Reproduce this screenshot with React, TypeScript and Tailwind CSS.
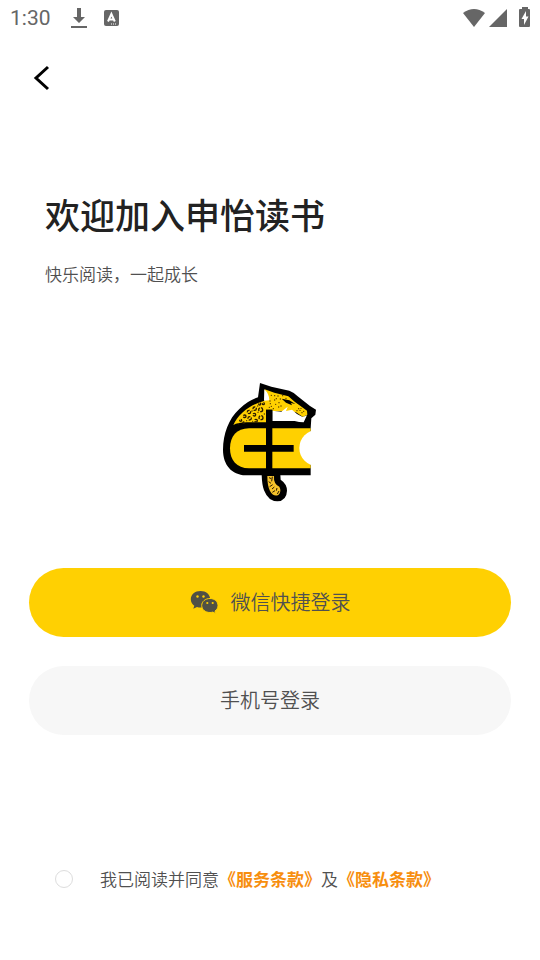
import type { ReactNode } from 'react';

const spots = [
  [92, 136, 3], [104, 124, 4], [117, 111, 5], [101, 143, 2], [119, 130, 5], [133, 119, 4],
  [134, 101, 5], [152, 104, 6], [149, 87, 3], [153, 128, 6], [138, 137, 4], [160, 86, 3],
];

const dots = [
  [184, 61], [194, 62], [204, 63], [199, 71], [211, 72], [207, 83], [218, 62], [194, 75],
  [184, 94], [197, 88], [206, 96], [190, 101], [181, 86], [213, 93], [228, 70], [178, 97],
  [261, 107], [270, 106], [276, 113], [281, 109], [266, 101], [273, 100],
  [180, 78], [110, 137], [126, 108], [144, 112], [143, 93], [86, 146], [163, 117], [128, 139],
];

function BrandLogo() {
  return (
    <svg viewBox="30 15 300 375" className="h-[125px] w-[100px]" role="img" aria-label="申怡读书">
      <path
        d="M150 24 L184 35 L238 47 Q252 52 263 64 L300 93 L318 104 L316 119 L304 130 L302 160 L302 301 L107 301 C65 299 39 270 39 224 C40 177 55 132 88 102 Q114 76 144 67 Z"
        fill="#000"
      />
      <path
        d="M302 160 H117 C80 160 60 185 60 220 C60 256 80 280 117 280 H302 Z"
        fill="#ffd000"
      />
      <path
        d="M70 150 C85 115 122 88 164 77 L164 43 L193 53 L235 64 L254 80 L291 107 L292 119 L279 126 L258 112 L238 108 L187 109 L187 104 H168 V142 H111 Q84 142 70 150 Z"
        fill="#ffd000"
      />
      <path d="M163 43 Q178 57 178 76 L162 77 Z" fill="#fff" />
      <path
        d="M187 107 L214 110 L233 95 L228 108 L246 104 L261 117 L278 126 L291 121 L281 142 Q267 142 254 138 L187 138 Z"
        fill="#fff"
      />
      <path d="M215 71 L238 76 L256 87 L243 84 L246 91 L228 83 Z" fill="#000" />
      {spots.map(([x, y, r]) => (
        <circle
          key={`${x}-${y}`}
          cx={x}
          cy={y}
          r={r}
          fill="none"
          stroke="#2b1b00"
          strokeWidth="4"
          strokeDasharray="10 3"
        />
      ))}
      {dots.map(([x, y]) => (
        <circle key={`${x}-${y}`} cx={x} cy={y} r="2" fill="#4d3200" />
      ))}
      <circle cx="322" cy="219" r="54" fill="#fff" />
      <path d="M168 104 H187 V284 H168 Z M102 210 H251 V230 H102 Z" fill="#000" />
      <path
        d="M155 299 H211 L212 314 Q231 327 231 347 Q230 377 202 379 Q175 379 162 346 Q156 330 155 299 Z"
        fill="#000"
      />
      <path
        d="M172 303 H192 Q190 327 208 335 Q216 350 205 360 Q190 366 180 348 Q172 333 172 303 Z"
        fill="#f5c22b"
      />
      <path
        d="M177 308 L184 311 M187 305 L185 319 M176 320 L183 325 M179 335 L188 329 M186 342 L193 336 M187 352 L195 347 M201 339 L199 347 M207 348 L202 357"
        fill="none"
        stroke="#2b1b00"
        strokeWidth="3"
      />
    </svg>
  );
}

function WechatIcon() {
  return (
    <svg viewBox="0 0 28 24" className="h-6 w-7" aria-hidden="true">
      <path
        d="M10.500 1 C5 1 .8 4.500 .8 9.300 C.8 12 2.200 14.300 4.300 15.800 L3.300 18.700 L7 17 Q8.700 17.600 10.500 17.600 C16 17.600 20.200 14 20.200 9.300 C20.200 4.500 16 1 10.500 1 Z"
        fill="#505045"
      />
      <path
        d="M20 8.500 C15.300 8.500 11.700 11.500 11.700 15.500 C11.700 19.500 15.300 22.500 20 22.500 Q21.500 22.500 22.800 22.100 L25.700 23.500 L25 21 C27 19.700 28 17.800 28 15.500 C28 11.500 24.500 8.500 20 8.500 Z"
        fill="#505045"
        stroke="#ffd000"
        strokeWidth="1"
      />
      <g fill="#ffd000">
        <circle cx="7.500" cy="6.500" r="1.200" />
        <circle cx="13.500" cy="6.500" r="1.200" />
        <circle cx="17.300" cy="13" r="1.100" />
        <circle cx="22.700" cy="13" r="1.100" />
      </g>
    </svg>
  );
}

function StatusBar() {
  return (
    <div className="flex h-9 items-center justify-between pl-[10px] pr-2 text-[#666]">
      <div className="flex items-center">
        <span className="font-[Roboto,sans-serif] text-[21px] leading-7">1:30</span>
        <svg viewBox="0 0 16 22" className="ml-5 h-[22px] w-4" fill="currentColor" aria-hidden="true">
          <path d="M6 1 H10 V10 H14 L8 16 L2 10 H6 Z M0 19 H16 V21 H0 Z" />
        </svg>
        <svg viewBox="0 0 16 16" className="ml-[17px] size-4" aria-hidden="true">
          <rect width="15" height="16" rx="2" fill="currentColor" />
          <path d="M4 11.500 L7.400 4 L10.800 11.500 M5.200 9.500 H9.600" fill="none" stroke="#fff" strokeWidth="2" />
          <path d="M7 14 H13" stroke="#fff" strokeWidth="1" strokeDasharray="1 1" />
        </svg>
      </div>
      <svg viewBox="0 0 70 22" className="h-[22px] w-[70px]" fill="currentColor" aria-hidden="true">
        <path d="M1 6 Q12 -2 23 6 L12 20 Z" />
        <path d="M27 20 L45 2 V20 Z" />
        <path d="M60 0 H66 V2 H67 Q68 2 68 3 V19 Q68 20 67 20 H58 Q57 20 57 19 V3 Q57 2 58 2 H60 Z" />
        <path d="M64 4 L59.500 12 H62 V18 L66.500 9.500 H64 Z" fill="#fff" />
      </svg>
    </div>
  );
}

interface LoginButtonProps {
  className: string;
  children: ReactNode;
}

function LoginButton({ className, children }: LoginButtonProps) {
  return (
    <button
      type="button"
      className={`flex h-[69px] w-full items-center justify-center gap-[13px] rounded-full pb-[2px] text-xl font-[350] text-[#505050] ${className}`}
    >
      {children}
    </button>
  );
}

export default function App() {
  return (
    <div className="min-h-screen bg-white font-['Noto_Sans_CJK_SC',sans-serif] text-[#505050]">
      <StatusBar />

      <header className="px-8 pt-7">
        <button type="button" aria-label="返回" className="flex h-7 w-5 items-center text-black">
          <svg viewBox="0 0 20 28" className="h-7 w-5" fill="none" stroke="currentColor" strokeWidth="3">
            <path d="M16 3 L4 14 L16 25" />
          </svg>
        </button>
      </header>

      <main className="px-[29px]">
        <section className="px-4 pt-24">
          <h1 className="text-[35px] font-medium leading-[52px] text-[#222]">欢迎加入申怡读书</h1>
          <p className="mt-[22px] text-[17px] font-[350] leading-6">快乐阅读，一起成长</p>
        </section>

        <div className="mt-[94px] flex justify-center">
          <BrandLogo />
        </div>

        <div className="mt-[63px] flex flex-col gap-[29px]">
          <LoginButton className="bg-[#ffd002]">
            <WechatIcon />
            <span>微信快捷登录</span>
          </LoginButton>
          <LoginButton className="bg-[#f7f7f7]">手机号登录</LoginButton>
        </div>

        <div className="mt-[132px] flex items-center pl-[26px] text-[17px] font-[350] leading-6">
          <input
            id="agree"
            type="checkbox"
            className="size-[18px] shrink-0 appearance-none rounded-full border border-[#ddd] checked:bg-[#ffd002]"
          />
          <div className="ml-[27px]">
            <label htmlFor="agree">我已阅读并同意</label>
            <a href="#terms" className="font-bold text-[#f78e0e]">《服务条款》</a>
            及
            <a href="#privacy" className="font-bold text-[#f78e0e]">《隐私条款》</a>
          </div>
        </div>
      </main>
    </div>
  );
}
